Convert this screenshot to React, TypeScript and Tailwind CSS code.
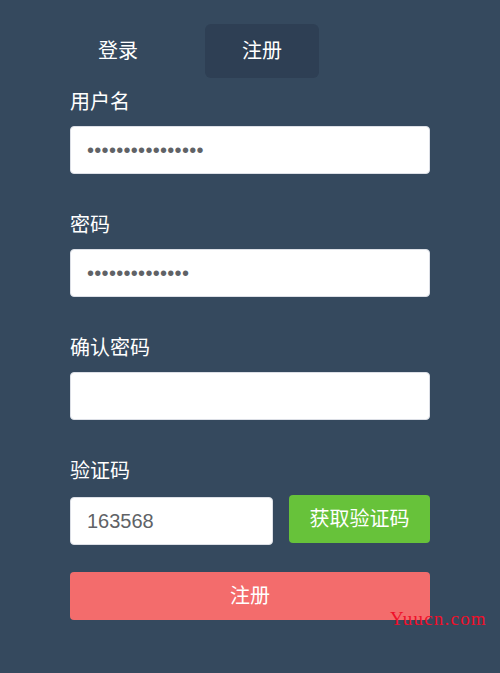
const FONT = "font-['Liberation_Sans','Noto_Sans_CJK_SC',sans-serif]";

const Field = ({ label, type = "text", value }: { label: string; type?: string; value: string }) => (
  <div className="mb-[35px]">
    <div className="mb-[10px] pt-[2px] text-[20px] leading-[28px] text-white">{label}</div>
    <input
      type={type}
      value={value}
      readOnly
      className="block h-12 w-full rounded border border-[#dcdfe6] bg-white px-4 text-[20px] tracking-[0.3px] text-[#606266] outline-none"
    />
  </div>
);

export default function App() {
  return (
    <div className={`relative min-h-[673px] w-[500px] bg-[#35495e] ${FONT}`}>
      <div className="flex gap-[30px] pl-[61px] pt-6">
        <button type="button" className="h-[54px] w-[114px] rounded-md text-[20px] text-white">
          登录
        </button>
        <button type="button" className="h-[54px] w-[114px] rounded-md bg-[#2e3f54] text-[20px] text-white">
          注册
        </button>
      </div>

      <form className="ml-[70px] mt-2 w-[360px]" onSubmit={(e) => e.preventDefault()}>
        <Field label="用户名" type="password" value="xxxxxxxxxxxxxxxx" />
        <Field label="密码" type="password" value="xxxxxxxxxxxxxx" />
        <Field label="确认密码" type="password" value="" />

        <div className="mb-[10px] pt-[2px] text-[20px] leading-[28px] text-white">验证码</div>
        <div className="flex items-start justify-between">
          <input
            type="text"
            value="163568"
            readOnly
            className="mt-[2px] block h-12 w-[203px] rounded border border-[#dcdfe6] bg-white px-4 text-[20px] text-[#606266] outline-none"
          />
          <button type="button" className="h-12 w-[141px] rounded bg-[#67c23a] text-[20px] text-white">
            获取验证码
          </button>
        </div>

        <button type="submit" className="mt-[27px] h-12 w-full rounded bg-[#f36c6c] text-[20px] text-white">
          注册
        </button>
      </form>

      <span className="absolute left-[390px] top-[605px] font-['Liberation_Serif',serif] text-[19px] tracking-[1.2px] text-[#f0102a]">
        Yuucn.com
      </span>
    </div>
  );
}
